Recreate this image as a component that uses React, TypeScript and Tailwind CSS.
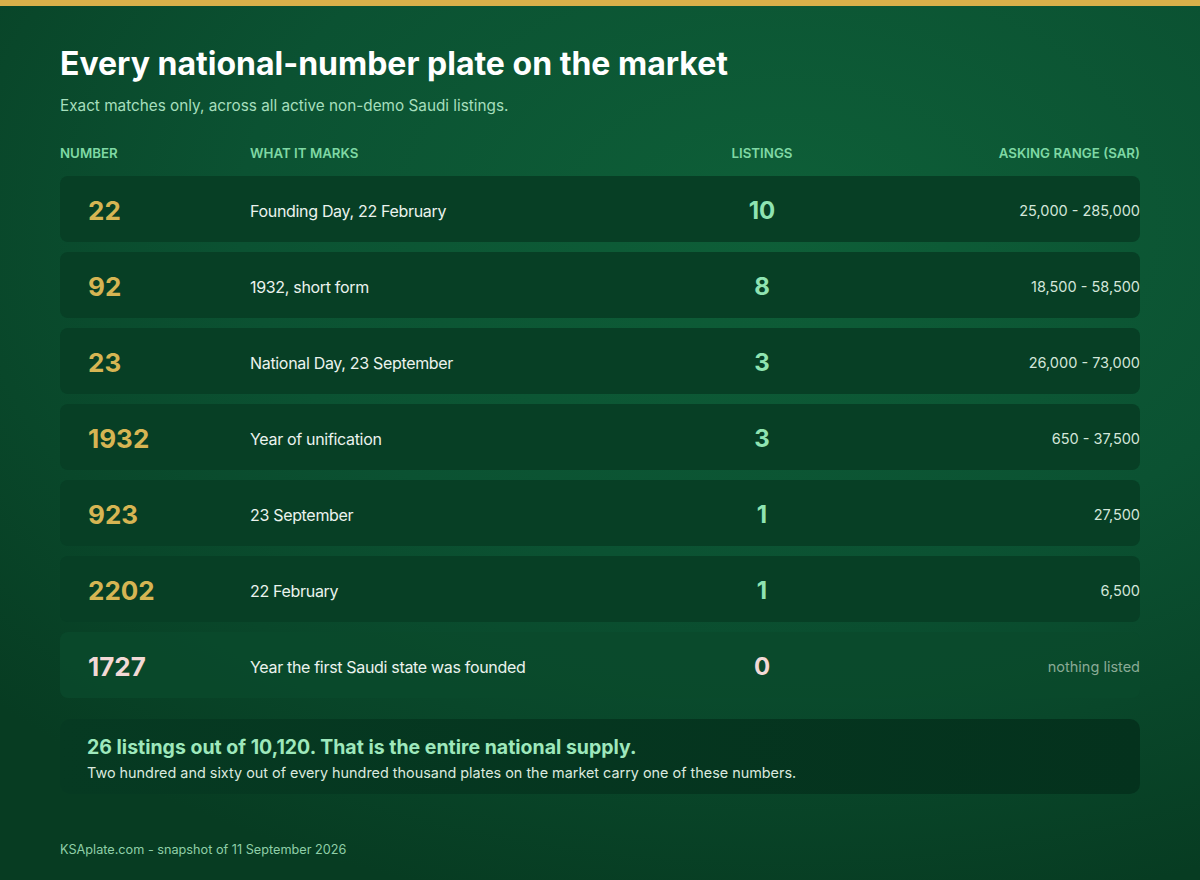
const rows = [
  { num: "22", what: "Founding Day, 22 February", count: "10", range: "25,000 - 285,000" },
  { num: "92", what: "1932, short form", count: "8", range: "18,500 - 58,500" },
  { num: "23", what: "National Day, 23 September", count: "3", range: "26,000 - 73,000" },
  { num: "1932", what: "Year of unification", count: "3", range: "650 - 37,500" },
  { num: "923", what: "23 September", count: "1", range: "27,500" },
  { num: "2202", what: "22 February", count: "1", range: "6,500" },
  { num: "1727", what: "Year the first Saudi state was founded", count: "0", range: "" },
]

export default function App() {
  return (
    <div
      className="w-[1200px] h-[880px] overflow-hidden bg-[radial-gradient(ellipse_90%_80%_at_65%_25%,#0e5f38_0%,#0b5232_50%,#073c22_100%)] text-white"
      style={{ fontFamily: "Inter, 'Noto Sans', sans-serif" }}
    >
      <div className="h-[6px] bg-[#d9b04a]" />

      <div className="px-[60px] pt-[38px]">
        <h1 className="text-[32px] leading-[40px] font-bold text-white">
          Every national-number plate on the market
        </h1>
        <p className="mt-[12px] text-[15.3px] leading-[20px] text-[#a6dfbd]">
          Exact matches only, across all active non-demo Saudi listings.
        </p>

        {/* header */}
        <div className="mt-[29px] grid grid-cols-[190px_1fr_120px_318px] text-[13.3px] leading-[16px] font-semibold text-[#7fd8a4]">
          <div>NUMBER</div>
          <div>WHAT IT MARKS</div>
          <div className="text-center">LISTINGS</div>
          <div className="text-right">ASKING RANGE (SAR)</div>
        </div>

        {/* rows */}
        <div className="mt-[15px] flex flex-col gap-[10px]">
          {rows.map((r) => {
            const none = r.count === "0"
            return (
              <div
                key={r.num}
                className={
                  "grid grid-cols-[190px_1fr_120px_318px] items-center h-[66px] pt-[3px] rounded-[8px] " +
                  (none ? "bg-[#0a4a2c]/80" : "bg-[#073f25]")
                }
              >
                <div
                  className={
                    "pl-[28px] text-[26px] font-bold leading-none " +
                    (none ? "text-[#f3d9d6]" : "text-[#d6b553]")
                  }
                >
                  {r.num}
                </div>
                <div className="text-[16px] tracking-[-0.32px] text-[#ebf3ee]">{r.what}</div>
                <div
                  className={
                    "text-center text-[24px] font-bold " +
                    (none ? "text-[#f3d9d6]" : "text-[#8fe4b2]")
                  }
                >
                  {r.count}
                </div>
                <div
                  className={
                    "text-right " +
                    (none ? "text-[14.5px] text-[#8aab96]" : "text-[14.5px] text-[#d3e6da]")
                  }
                >
                  {none ? "nothing listed" : r.range}
                </div>
              </div>
            )
          })}
        </div>

        {/* summary */}
        <div className="mt-[21px] rounded-[10px] bg-[linear-gradient(90deg,#063a22,#04321d)] px-[27px] pt-[15px] pb-[11px]">
          <div className="text-[19.5px] leading-[26px] font-bold text-[#9ee8bc]">
            26 listings out of 10,120. That is the entire national supply.
          </div>
          <div className="mt-[3px] text-[14.4px] leading-[20px] text-[#dbe9df]">
            Two hundred and sixty out of every hundred thousand plates on the market carry one of these numbers.
          </div>
        </div>

        <div className="mt-[48px] text-[12.7px] leading-[16px] text-[#8fcfa8]">
          KSAplate.com - snapshot of 11 September 2026
        </div>
      </div>
    </div>
  )
}
